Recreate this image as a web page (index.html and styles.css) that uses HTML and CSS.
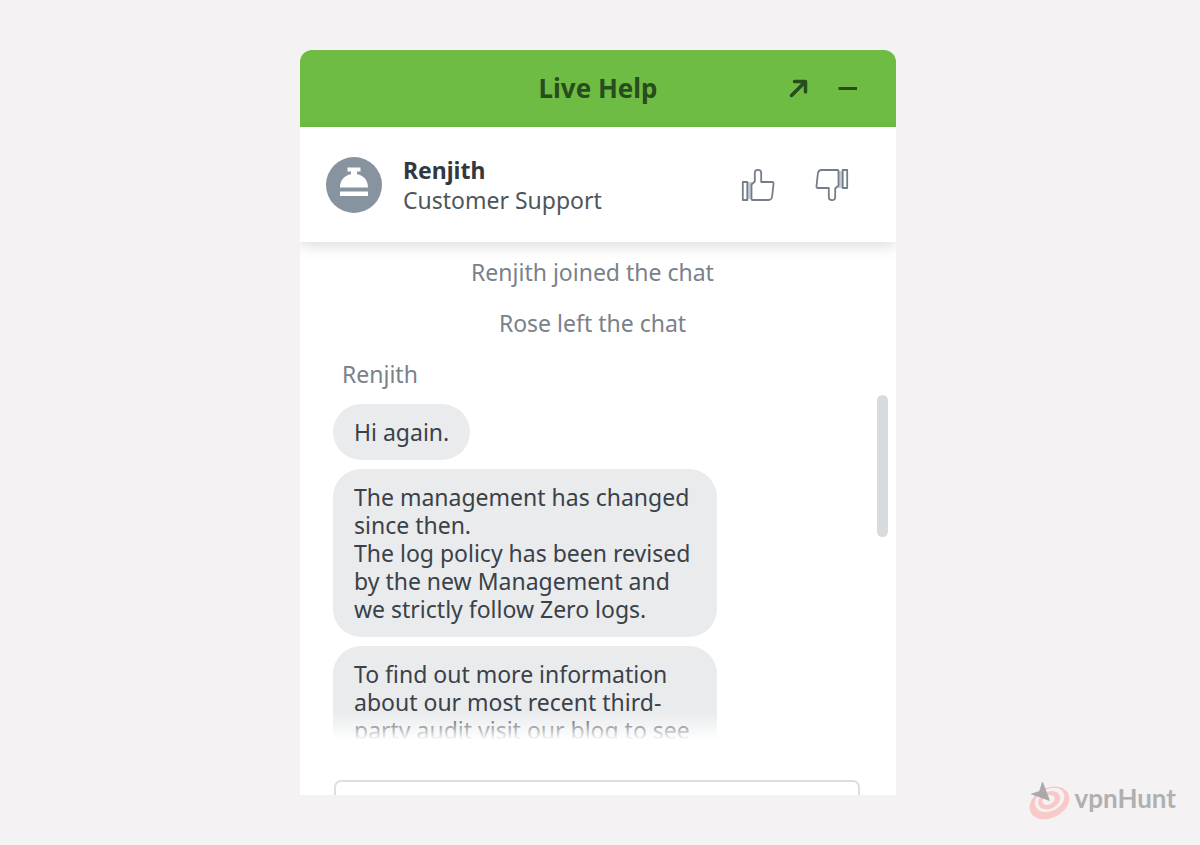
FILE: index.html
```html
<!DOCTYPE html>
<html lang="en">
<head>
<meta charset="utf-8">
<meta name="viewport" content="width=device-width, initial-scale=1">
<title>Live Help</title>
<link rel="stylesheet" href="styles.css">
</head>
<body>
<main class="stage">
  <section class="widget" aria-label="Live Help">
    <header class="titlebar">
      <h1 class="title">Live Help</h1>
      <div class="window-actions">
        <button class="icon-button" type="button" aria-label="Open in new window">
          <svg width="20" height="20" viewBox="0 0 20 20" fill="none" stroke="currentColor" stroke-width="3.500" stroke-linecap="round" stroke-linejoin="round"><path d="M2.500 17.500 15 5M5.500 3.500H16.500V14"/></svg>
        </button>
        <button class="icon-button" type="button" aria-label="Minimize">
          <svg width="20" height="20" viewBox="0 0 20 20" fill="none" stroke="currentColor" stroke-width="3.200"><path d="M.5 10.500H19"/></svg>
        </button>
      </div>
    </header>
    <div class="agent">
      <svg class="avatar" width="56" height="56" viewBox="0 0 56 56" aria-hidden="true">
        <circle cx="28" cy="28" r="28" fill="#8893a0"/>
        <g fill="#fff"><path d="M21.500 10.500H34.500V14.500H31V17.200C37.500 18.300 42 23 42 30.500H14C14 23 18.500 18.300 25 17.200V14.500H21.500Z"/><rect x="14" y="34.500" width="28" height="4.500"/></g>
      </svg>
      <div class="agent-text">
        <strong class="agent-name">Renjith</strong>
        <span class="agent-role">Customer Support</span>
      </div>
      <div class="rating">
        <button class="icon-button" type="button" aria-label="Rate as good">
          <svg width="34" height="34" viewBox="0 0 34 34" fill="none" stroke="#747d88" stroke-width="1.800" stroke-linejoin="round"><path fill="#c5cdd6" stroke="none" d="M7 14h4v17H7z"/><path d="M1.800 14H6.300V32H1.800ZM10.500 31.500V16.500L13.800 13.500V5Q13.800 1.800 17 1.800T20.200 5V14H31.200Q32.700 14 32.500 16L31.200 28Q30.800 32 27.500 32H11.500Q10.500 32 10.500 31"/></svg>
        </button>
        <button class="icon-button" type="button" aria-label="Rate as bad">
          <svg width="34" height="34" viewBox="0 0 34 34" fill="none" stroke="#747d88" stroke-width="1.800" stroke-linejoin="round"><g transform="rotate(180 17 17)"><path fill="#c5cdd6" stroke="none" d="M7 14h4v17H7z"/><path d="M1.800 14H6.300V32H1.800ZM10.500 31.500V16.500L13.800 13.500V5Q13.800 1.800 17 1.800T20.200 5V14H31.200Q32.700 14 32.500 16L31.200 28Q30.800 32 27.500 32H11.500Q10.500 32 10.500 31"/></g></svg>
        </button>
      </div>
    </div>
    <div class="messages">
      <p class="notice">Renjith joined the chat</p>
      <p class="notice">Rose left the chat</p>
      <p class="author">Renjith</p>
      <div class="bubble">Hi again.</div>
      <div class="bubble">The management has changed since then.<br>The log policy has been revised by the new Management and we strictly follow Zero logs.</div>
      <div class="bubble">To find out more information about our most recent third-party audit visit our blog to see</div>
      <div class="fade"></div>
      <div class="scrollbar"></div>
    </div>
    <form class="composer">
      <input class="composer-input" type="text" aria-label="Message">
    </form>
  </section>
  <div class="brand">
    <svg width="42" height="38" viewBox="0 0 42 38" aria-hidden="true">
      <g transform="rotate(-27 21 20)">
        <ellipse cx="21" cy="21" rx="21" ry="15" fill="#f9c9ca"/>
        <ellipse cx="22.500" cy="18.500" rx="15.500" ry="11" fill="#f4f2f3"/>
        <ellipse cx="22" cy="18.500" rx="11.500" ry="8.500" fill="#f9c9ca"/>
        <ellipse cx="21.500" cy="18" rx="6.500" ry="4.500" fill="#f4f2f3"/>
      </g>
      <path d="M14.500 0 21.500 18.500 3.500 12 11.500 9.500Z" fill="#a9a9aa" stroke="#a9a9aa" stroke-width=".8"/>
    </svg>
    <span class="brand-name">vpnHunt</span>
  </div>
</main>
</body>
</html>
```

FILE: styles.css
```css
* {
  box-sizing: border-box;
}

body {
  margin: 0;
  background: #f4f2f3;
  color: #3a4149;
  font-family: "Noto Sans", "Open Sans", sans-serif;
  font-size: 23px;
  line-height: 28px;
}

h1,
p {
  margin: 0;
}

.stage {
  position: relative;
  display: flex;
  justify-content: center;
  height: 100vh;
  padding: 50px 4px 50px 0;
}

.widget {
  display: flex;
  flex-direction: column;
  width: 100%;
  max-width: 596px;
  overflow: hidden;
  background: #fff;
  border-radius: 12px 12px 0 0;
}

.titlebar {
  display: grid;
  grid-template-columns: 1fr auto 1fr;
  align-items: center;
  padding: 24px 38px 25px;
  background: #6fbc44;
  color: #284d1c;
}

.title {
  grid-column: 2;
  font-size: 26px;
  line-height: 28px;
  font-weight: 700;
}

.window-actions {
  display: flex;
  justify-content: flex-end;
  gap: 29px;
}

.icon-button {
  display: flex;
  padding: 0;
  border: 0;
  background: none;
  color: inherit;
  cursor: pointer;
}

.agent {
  position: relative;
  display: flex;
  align-items: center;
  padding: 28px 47px 27px 26px;
  background: #fff;
  box-shadow: 0 4px 14px rgba(0, 0, 0, 0.14);
}

.agent-text {
  display: flex;
  flex-direction: column;
  flex: 1;
  margin-left: 21px;
  line-height: 30px;
}

.agent-name {
  color: #303941;
}

.agent-role {
  color: #4d555d;
}

.rating {
  display: flex;
  gap: 40px;
}

.messages {
  position: relative;
  display: flex;
  flex: 1;
  flex-direction: column;
  align-items: flex-start;
  gap: 9px;
  min-height: 0;
  padding: 16px 44px 0 33px;
  overflow: hidden;
}

.notice,
.author {
  flex: none;
  margin-bottom: 14px;
  color: #79818a;
}

.notice {
  align-self: center;
}

.author {
  margin: 0 9px 7px;
}

.bubble {
  flex: none;
  max-width: 74%;
  padding: 14px 21px;
  border-radius: 28px;
  background: #e9ebed;
}

.fade {
  position: absolute;
  right: 0;
  bottom: 0;
  left: 0;
  height: 28px;
  background: linear-gradient(rgba(255, 255, 255, 0), #fff);
}

.scrollbar {
  position: absolute;
  top: 153px;
  right: 8px;
  width: 11px;
  height: 142px;
  border-radius: 6px;
  background: #d8dbde;
}

.composer {
  flex: none;
  height: 55px;
  padding: 40px 36px 0 34px;
  overflow: hidden;
}

.composer-input {
  width: 100%;
  height: 60px;
  border: 2px solid #dcdfe1;
  border-radius: 7px;
  background: #fff;
  font: inherit;
}

.brand {
  position: absolute;
  right: 24px;
  bottom: 25px;
  display: flex;
  gap: 5px;
}

.brand-name {
  padding-top: 2px;
  color: #b0b0b1;
  font-family: Lato, sans-serif;
  font-size: 26px;
  font-weight: 700;
}
```
